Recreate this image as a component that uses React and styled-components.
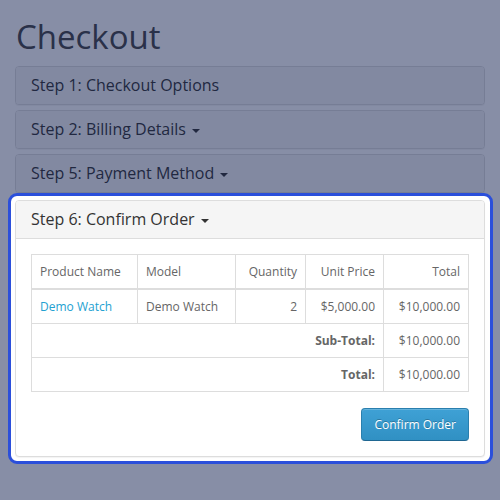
import React from "react";
import styled, { createGlobalStyle } from "styled-components";

const GlobalStyle = createGlobalStyle`
  html, body {
    margin: 0;
    padding: 0;
    background: #ffffff;
  }
  body {
    font-family: "Open Sans", "Liberation Sans", sans-serif;
    font-size: 12px;
    color: #666;
  }
`;

const Page = styled.div`
  padding: 19px 15px 20px;
`;

const Title = styled.h1`
  margin: 0 0 11px 1px;
  font-size: 33px;
  font-weight: 400;
  line-height: 36px;
  color: #444;
`;

const PanelGroup = styled.div`
  display: flex;
  flex-direction: column;
  gap: 5px;
`;

const Highlight = styled.div`
  position: relative;
  z-index: 10;
  margin: -5px -8px 0 -7px;
  padding: 4px 5px 4px 4px;
  background: #fff;
  border: 3px solid #2b4fdb;
  border-radius: 9px;
`;

const Panel = styled.div`
  background: #fff;
  border: 1px solid #ddd;
  border-radius: 4px;
  box-shadow: 0 1px 1px rgba(0, 0, 0, 0.05);
`;

const Heading = styled.div`
  background: #f5f5f5;
  border-bottom: ${p => (p.$open ? "1px solid #ddd" : "0")};
  border-radius: ${p => (p.$open ? "3px 3px 0 0" : "3px")};
  padding: 10px 15px;
  font-size: 16px;
  line-height: 17px;
  color: #333;
`;

const Caret = styled.span`
  display: inline-block;
  width: 0;
  height: 0;
  margin-left: 2px;
  vertical-align: middle;
  border-top: 4px solid #333;
  border-left: 4px solid transparent;
  border-right: 4px solid transparent;
`;

const Body = styled.div`
  padding: 15px;
`;

const Table = styled.table`
  width: 100%;
  table-layout: fixed;
  border-collapse: collapse;
  margin-bottom: 16px;
  font-size: 12px;
  line-height: 17px;
`;

const Th = styled.th`
  box-sizing: border-box;
  font-weight: 400;
  text-align: ${p => p.$align || "left"};
  padding: 8px;
  border: 1px solid #ddd;
  border-bottom-width: 2px;
  width: ${p => (p.$w ? `${p.$w}px` : "auto")};
  white-space: nowrap;
`;

const Td = styled.td`
  text-align: ${p => p.$align || "left"};
  font-weight: ${p => (p.$bold ? 700 : 400)};
  padding: 8px;
  border: 1px solid #ddd;
  white-space: nowrap;
`;

const ProductLink = styled.a`
  color: #23a1d1;
  text-decoration: none;
`;

const Actions = styled.div`
  display: flex;
  justify-content: flex-end;
`;

const Button = styled.button`
  font-family: inherit;
  font-size: 12px;
  line-height: 17px;
  padding: 7px 12px;
  color: #fff;
  background: linear-gradient(to bottom, #3fa1d5, #3090c3);
  border: 1px solid #2a7fae;
  border-bottom-color: #1f6792;
  border-radius: 4px;
  text-shadow: 0 -1px 0 rgba(0, 0, 0, 0.25);
  box-shadow: inset 0 1px 0 rgba(255, 255, 255, 0.2);
  cursor: pointer;
`;

const Overlay = styled.div`
  position: fixed;
  inset: 0;
  background: rgba(15, 29, 77, 0.5);
  z-index: 5;
`;

const rows = [
  { label: "Sub-Total:", value: "$10,000.00" },
  { label: "Total:", value: "$10,000.00" },
];

export default function App() {
  return (
    <>
      <GlobalStyle />
      <Page>
        <Title>Checkout</Title>
        <PanelGroup>
          <Panel>
            <Heading>Step 1: Checkout Options</Heading>
          </Panel>
          <Panel>
            <Heading>
              Step 2: Billing Details <Caret />
            </Heading>
          </Panel>
          <Panel>
            <Heading>
              Step 5: Payment Method <Caret />
            </Heading>
          </Panel>
          <Highlight>
            <Panel>
              <Heading $open>
                Step 6: Confirm Order <Caret />
              </Heading>
              <Body>
                <Table>
                  <thead>
                    <tr>
                      <Th $w={106}>Product Name</Th>
                      <Th $w={98}>Model</Th>
                      <Th $w={70} $align="right">Quantity</Th>
                      <Th $w={78} $align="right">Unit Price</Th>
                      <Th $align="right">Total</Th>
                    </tr>
                  </thead>
                  <tbody>
                    <tr>
                      <Td>
                        <ProductLink href="#">Demo Watch</ProductLink>
                      </Td>
                      <Td>Demo Watch</Td>
                      <Td $align="right">2</Td>
                      <Td $align="right">$5,000.00</Td>
                      <Td $align="right">$10,000.00</Td>
                    </tr>
                    {rows.map(r => (
                      <tr key={r.label}>
                        <Td colSpan={4} $align="right" $bold>
                          {r.label}
                        </Td>
                        <Td $align="right">{r.value}</Td>
                      </tr>
                    ))}
                  </tbody>
                </Table>
                <Actions>
                  <Button>Confirm Order</Button>
                </Actions>
              </Body>
            </Panel>
          </Highlight>
        </PanelGroup>
      </Page>
      <Overlay />
    </>
  );
}
